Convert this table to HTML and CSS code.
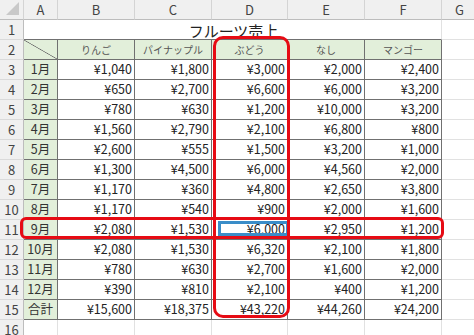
FILE: index.html
```html
<!DOCTYPE html>
<html lang="ja">
<head>
<meta charset="utf-8">
<title>フルーツ売上</title>
<link rel="stylesheet" href="styles.css">
</head>
<body>
<div class="view">
  <div class="sheet">
    <div class="hd corner"><svg class="tri" width="14" height="14" viewBox="0 0 14 14"><polygon points="0,13 13,0 13,13" fill="#c9c9c9"/></svg></div>
    <div class="hd">A</div><div class="hd">B</div><div class="hd">C</div><div class="hd">D</div><div class="hd">E</div><div class="hd">F</div><div class="hd">G</div>

    <div class="rn">1</div><div class="c title tb">フルーツ売上</div><div class="c"></div>

    <div class="rn">2</div><div class="c t g diag"></div><div class="c t g fh">りんご</div><div class="c t g fh">パイナップル</div><div class="c t g fh">ぶどう</div><div class="c t g fh">なし</div><div class="c t g fh">マンゴー</div><div class="c"></div>

    <div class="rn">3</div><div class="c t g m">1月</div><div class="c t n">¥1,040</div><div class="c t n">¥1,800</div><div class="c t n">¥3,000</div><div class="c t n">¥2,000</div><div class="c t n">¥2,400</div><div class="c"></div>
    <div class="rn">4</div><div class="c t g m">2月</div><div class="c t n">¥650</div><div class="c t n">¥2,700</div><div class="c t n">¥6,600</div><div class="c t n">¥6,000</div><div class="c t n">¥3,200</div><div class="c"></div>
    <div class="rn">5</div><div class="c t g m">3月</div><div class="c t n">¥780</div><div class="c t n">¥630</div><div class="c t n">¥1,200</div><div class="c t n">¥10,000</div><div class="c t n">¥3,200</div><div class="c"></div>
    <div class="rn">6</div><div class="c t g m">4月</div><div class="c t n">¥1,560</div><div class="c t n">¥2,790</div><div class="c t n">¥2,100</div><div class="c t n">¥6,800</div><div class="c t n">¥800</div><div class="c"></div>
    <div class="rn">7</div><div class="c t g m">5月</div><div class="c t n">¥2,600</div><div class="c t n">¥555</div><div class="c t n">¥1,500</div><div class="c t n">¥3,200</div><div class="c t n">¥1,000</div><div class="c"></div>
    <div class="rn">8</div><div class="c t g m">6月</div><div class="c t n">¥1,300</div><div class="c t n">¥4,500</div><div class="c t n">¥6,000</div><div class="c t n">¥4,560</div><div class="c t n">¥2,000</div><div class="c"></div>
    <div class="rn">9</div><div class="c t g m">7月</div><div class="c t n">¥1,170</div><div class="c t n">¥360</div><div class="c t n">¥4,800</div><div class="c t n">¥2,650</div><div class="c t n">¥3,800</div><div class="c"></div>
    <div class="rn">10</div><div class="c t g m">8月</div><div class="c t n">¥1,170</div><div class="c t n">¥540</div><div class="c t n">¥900</div><div class="c t n">¥2,000</div><div class="c t n">¥1,600</div><div class="c"></div>
    <div class="rn">11</div><div class="c t g m">9月</div><div class="c t n">¥2,080</div><div class="c t n">¥1,530</div><div class="c t n">¥6,000</div><div class="c t n">¥2,950</div><div class="c t n">¥1,200</div><div class="c"></div>
    <div class="rn">12</div><div class="c t g m">10月</div><div class="c t n">¥2,080</div><div class="c t n">¥1,530</div><div class="c t n">¥6,320</div><div class="c t n">¥2,100</div><div class="c t n">¥1,800</div><div class="c"></div>
    <div class="rn">13</div><div class="c t g m">11月</div><div class="c t n">¥780</div><div class="c t n">¥630</div><div class="c t n">¥2,700</div><div class="c t n">¥1,600</div><div class="c t n">¥2,000</div><div class="c"></div>
    <div class="rn">14</div><div class="c t g m">12月</div><div class="c t n">¥390</div><div class="c t n">¥810</div><div class="c t n">¥2,100</div><div class="c t n">¥400</div><div class="c t n">¥1,200</div><div class="c"></div>
    <div class="rn">15</div><div class="c t g m">合計</div><div class="c t n">¥15,600</div><div class="c t n">¥18,375</div><div class="c t n">¥43,220</div><div class="c t n">¥44,260</div><div class="c t n">¥24,200</div><div class="c"></div>
    <div class="rn">16</div><div class="c"></div><div class="c"></div><div class="c"></div><div class="c"></div><div class="c"></div><div class="c"></div><div class="c"></div>

    <div class="select"></div>
    <div class="mark mark-col"></div>
    <div class="mark mark-row"></div>
  </div>
</div>
</body>
</html>
```

FILE: styles.css
```css
html, body {
  margin: 0;
  padding: 0;
  background: #ffffff;
}

.view {
  width: 474px;
  height: 335px;
  overflow: hidden;
}

.sheet {
  position: relative;
  display: grid;
  grid-template-columns: 24px 34px 77px 77px 76px 77px 77px 36px;
  grid-auto-rows: 20px;
  width: 478px;
  font-family: "Noto Sans CJK JP", "Noto Sans", sans-serif;
  color: #222;
}

.sheet > div:not(.mark):not(.select) {
  box-sizing: border-box;
  display: flex;
  align-items: center;
  overflow: hidden;
  white-space: nowrap;
  line-height: 1;
}

.hd {
  background: #f0f0f0;
  color: #444;
  font-size: 13px;
  justify-content: center;
  border-right: 1px solid #d4d4d4;
  border-bottom: 1px solid #bdbdbd;
}

.corner {
  position: relative;
  justify-content: flex-end !important;
  align-items: flex-end !important;
  padding: 0 3px 3px 0;
}

.rn {
  background: #f0f0f0;
  color: #444;
  font-size: 13px;
  justify-content: center;
  border-right: 1px solid #bdbdbd;
  border-bottom: 1px solid #dadada;
}

.c {
  border-right: 1px solid #e1e1e1;
  border-bottom: 1px solid #e1e1e1;
  font-size: 12.5px;
}

.sheet > .title {
  grid-column: span 6;
  justify-content: center;
  font-size: 15px;
  line-height: 18px;
  color: #222;
  padding: 1px 0 0 2px;
  border-right-color: #e1e1e1;
}

.tb {
  border-bottom-color: #707070;
}

.t {
  border-right-color: #707070;
  border-bottom-color: #707070;
}

.g {
  background: #e2efda;
}

.diag {
  background:
    linear-gradient(to top right, transparent calc(50% - 0.7px), #6a6a6a 50%, transparent calc(50% + 0.7px)),
    #e2efda;
}

.fh {
  justify-content: center;
  font-size: 10px;
  color: #555;
}

.m {
  justify-content: center;
  font-size: 12.5px;
  color: #333;
}

.n {
  justify-content: flex-end;
  padding-right: 2px;
  color: #222;
}

.mark {
  position: absolute;
  box-sizing: border-box;
  border: 3px solid #e60b14;
  pointer-events: none;
}

.mark-col {
  left: 213px;
  top: 36px;
  width: 77px;
  height: 282px;
  border-radius: 10px;
}

.mark-row {
  left: 20px;
  top: 217px;
  width: 424px;
  height: 22px;
  border-radius: 6px;
}

.select {
  position: absolute;
  box-sizing: border-box;
  left: 218px;
  top: 221px;
  width: 71px;
  height: 15px;
  border: 3px solid #3a8dc8;
}
```
